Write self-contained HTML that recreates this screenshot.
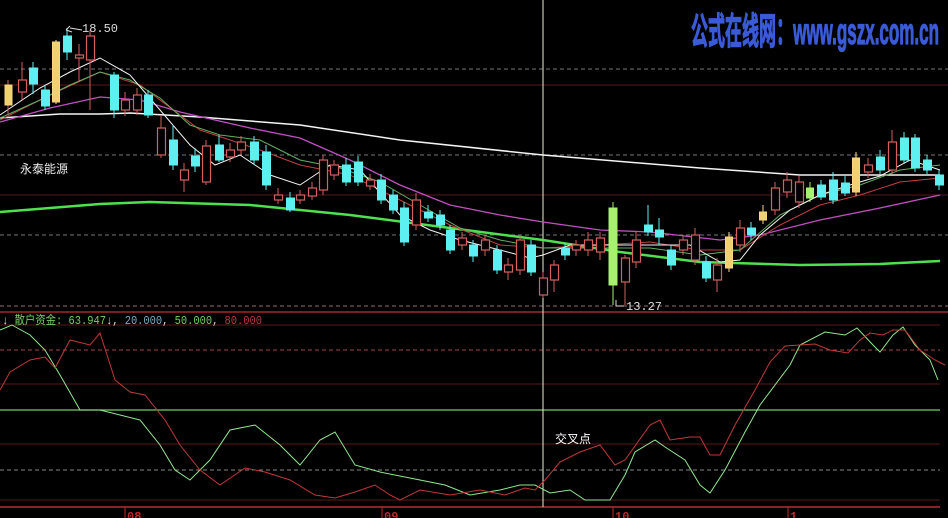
<!DOCTYPE html>
<html><head><meta charset="utf-8"><style>
html,body{margin:0;padding:0;background:#000;width:948px;height:518px;overflow:hidden}
svg{display:block}
.t{font-family:"Liberation Sans","Noto Sans CJK SC",sans-serif}
.m{font-family:"Liberation Mono","Noto Sans CJK SC",monospace}
.r{fill:#000;stroke:#d46060;stroke-width:1.2}
.c{fill:#5ef0f0;stroke:#5ef0f0}
.y{fill:#f0d070;stroke:#f8d880}
.g{fill:#a8f070;stroke:#a8f070}
.w{stroke-width:1}
</style></head><body>
<svg width="948" height="518" viewBox="0 0 948 518" xmlns="http://www.w3.org/2000/svg">
<rect width="948" height="518" fill="#000"/>
<g stroke="#777" stroke-dasharray="4,3" stroke-width="1">
<line x1="0" y1="69" x2="948" y2="69"/><line x1="0" y1="155" x2="948" y2="155"/><line x1="0" y1="235" x2="948" y2="235"/><line x1="0" y1="306" x2="948" y2="306"/>
</g>
<g stroke="#5a1818" stroke-width="1">
<line x1="0" y1="85" x2="948" y2="85"/><line x1="0" y1="195" x2="948" y2="195"/>
</g>
<line x1="0" y1="312" x2="948" y2="312" stroke="#a02828" stroke-width="1.5"/>
<g stroke="#5a1818" stroke-width="1">
<line x1="0" y1="325" x2="940" y2="325"/><line x1="0" y1="384" x2="940" y2="384"/><line x1="0" y1="444" x2="940" y2="444"/><line x1="0" y1="500" x2="940" y2="500"/>
</g>
<line x1="0" y1="350" x2="940" y2="350" stroke="#a04848" stroke-dasharray="4,3"/>
<line x1="0" y1="470" x2="940" y2="470" stroke="#888" stroke-dasharray="4,3"/>
<line x1="0" y1="410" x2="940" y2="410" stroke="#70d060" stroke-width="1.2"/>
<line x1="0" y1="507" x2="940" y2="507" stroke="#b03030" stroke-width="1.5"/>
<line x1="543" y1="0" x2="543" y2="507" stroke="#f0f0d0" stroke-width="1"/>
<polyline fill="none" stroke="#f4f4f4" stroke-width="1.5" points="0,118 60,114 100,114 130,113 200,117 300,125 400,140 543,155 700,168 800,175 940,175"/>
<polyline fill="none" stroke="#4ee04e" stroke-width="2.5" points="0,212 50,208 100,204 150,202 250,205 350,215 450,228 543,240 620,252 700,262 800,265 880,264 940,261"/>
<polyline fill="none" stroke="#c050c0" stroke-width="1.3" points="0,122 50,108 100,97 140,100 180,112 250,128 300,138 350,160 400,185 450,205 500,215 543,222 600,230 650,232 720,240 760,235 820,220 880,208 940,195"/>
<polyline fill="none" stroke="#c04040" stroke-width="1" points="0,120 50,95 100,72 140,85 200,130 260,150 300,165 350,175 400,200 450,225 500,245 543,248 600,245 650,242 700,250 740,250 780,225 820,205 860,195 900,182 940,178"/>
<polyline fill="none" stroke="#60b060" stroke-width="1" points="0,118 40,100 70,85 100,72 130,80 160,98 190,125 220,135 260,140 300,160 340,168 380,182 420,205 460,228 500,240 543,248 600,248 650,248 700,255 740,250 780,215 820,195 860,185 900,170 940,165"/>
<polyline fill="none" stroke="#f4f4f4" stroke-width="1" points="0,115 40,88 70,72 100,58 130,75 160,110 190,145 215,165 240,155 270,175 300,185 330,165 360,170 400,215 430,230 460,240 500,250 530,258 543,255 570,245 600,245 650,245 690,245 720,262 740,260 760,235 790,210 820,195 850,185 880,176 910,160 940,170"/>
<g class="w">
<g stroke="#d46060"><line x1="8" y1="80" x2="8" y2="115"/><line x1="22" y1="62" x2="22" y2="100"/><line x1="79" y1="44" x2="79" y2="82"/><line x1="90" y1="30" x2="90" y2="110"/><line x1="125" y1="92" x2="125" y2="116"/><line x1="137" y1="88" x2="137" y2="115"/><line x1="161" y1="115" x2="161" y2="158"/><line x1="184" y1="163" x2="184" y2="192"/><line x1="206" y1="140" x2="206" y2="185"/><line x1="230" y1="143" x2="230" y2="162"/><line x1="241" y1="136" x2="241" y2="155"/><line x1="278" y1="188" x2="278" y2="204"/><line x1="300" y1="190" x2="300" y2="204"/><line x1="312" y1="182" x2="312" y2="200"/><line x1="323" y1="155" x2="323" y2="195"/><line x1="334" y1="160" x2="334" y2="180"/><line x1="370" y1="174" x2="370" y2="190"/><line x1="416" y1="193" x2="416" y2="230"/><line x1="462" y1="232" x2="462" y2="250"/><line x1="485" y1="235" x2="485" y2="256"/><line x1="508" y1="258" x2="508" y2="280"/><line x1="520" y1="235" x2="520" y2="275"/><line x1="543" y1="272" x2="543" y2="298"/><line x1="554" y1="260" x2="554" y2="292"/><line x1="576" y1="240" x2="576" y2="256"/><line x1="588" y1="232" x2="588" y2="256"/><line x1="600" y1="232" x2="600" y2="260"/><line x1="625" y1="255" x2="625" y2="305"/><line x1="636" y1="232" x2="636" y2="268"/><line x1="683" y1="235" x2="683" y2="255"/><line x1="695" y1="228" x2="695" y2="265"/><line x1="717" y1="258" x2="717" y2="292"/><line x1="740" y1="220" x2="740" y2="252"/><line x1="775" y1="182" x2="775" y2="215"/><line x1="787" y1="172" x2="787" y2="198"/><line x1="799" y1="176" x2="799" y2="208"/><line x1="868" y1="158" x2="868" y2="178"/><line x1="892" y1="130" x2="892" y2="174"/></g>
<g stroke="#5ef0f0"><line x1="33" y1="62" x2="33" y2="94"/><line x1="45" y1="85" x2="45" y2="110"/><line x1="67" y1="28" x2="67" y2="60"/><line x1="114" y1="72" x2="114" y2="118"/><line x1="148" y1="90" x2="148" y2="118"/><line x1="173" y1="125" x2="173" y2="170"/><line x1="195" y1="148" x2="195" y2="172"/><line x1="219" y1="135" x2="219" y2="162"/><line x1="254" y1="136" x2="254" y2="165"/><line x1="266" y1="145" x2="266" y2="190"/><line x1="290" y1="192" x2="290" y2="212"/><line x1="346" y1="158" x2="346" y2="186"/><line x1="358" y1="156" x2="358" y2="186"/><line x1="381" y1="174" x2="381" y2="204"/><line x1="393" y1="190" x2="393" y2="214"/><line x1="404" y1="202" x2="404" y2="246"/><line x1="428" y1="205" x2="428" y2="222"/><line x1="440" y1="210" x2="440" y2="230"/><line x1="450" y1="225" x2="450" y2="254"/><line x1="473" y1="240" x2="473" y2="262"/><line x1="497" y1="245" x2="497" y2="274"/><line x1="531" y1="240" x2="531" y2="276"/><line x1="565" y1="243" x2="565" y2="260"/><line x1="648" y1="205" x2="648" y2="236"/><line x1="659" y1="218" x2="659" y2="245"/><line x1="671" y1="245" x2="671" y2="270"/><line x1="706" y1="256" x2="706" y2="282"/><line x1="751" y1="222" x2="751" y2="240"/><line x1="821" y1="180" x2="821" y2="200"/><line x1="833" y1="172" x2="833" y2="204"/><line x1="845" y1="176" x2="845" y2="196"/><line x1="880" y1="150" x2="880" y2="174"/><line x1="904" y1="132" x2="904" y2="164"/><line x1="915" y1="134" x2="915" y2="172"/><line x1="927" y1="155" x2="927" y2="174"/><line x1="939" y1="170" x2="939" y2="190"/></g>
<g stroke="#f8d880"><line x1="56" y1="40" x2="56" y2="104"/><line x1="729" y1="232" x2="729" y2="272"/><line x1="763" y1="205" x2="763" y2="224"/><line x1="856" y1="152" x2="856" y2="196"/></g>
<line x1="613" y1="202" x2="613" y2="305" stroke="#a8f070"/><line x1="810" y1="182" x2="810" y2="202" stroke="#a8f070"/>
</g>
<g>
<rect class="y" x="5" y="85" width="7" height="20"/>
<rect class="r" x="18.5" y="80" width="8" height="12"/>
<rect class="c" x="29.5" y="68" width="8" height="16"/>
<rect class="c" x="41.5" y="90" width="8" height="16"/>
<rect class="y" x="52.5" y="42" width="7" height="60"/>
<rect class="c" x="63.5" y="36" width="8" height="16"/>
<rect class="r" x="75.5" y="55" width="8" height="3"/>
<rect class="r" x="86.5" y="36" width="8" height="24"/>
<rect class="c" x="110.5" y="75" width="8" height="35"/>
<rect class="r" x="121.5" y="100" width="8" height="10"/>
<rect class="r" x="133.5" y="95" width="8" height="15"/>
<rect class="c" x="144.5" y="95" width="8" height="20"/>
<rect class="r" x="157.5" y="128" width="8" height="27"/>
<rect class="c" x="169.5" y="140" width="8" height="25"/>
<rect class="r" x="180.5" y="170" width="8" height="10"/>
<rect class="c" x="191.5" y="156" width="8" height="10"/>
<rect class="r" x="202.5" y="146" width="8" height="36"/>
<rect class="c" x="215.5" y="145" width="8" height="15"/>
<rect class="r" x="226.5" y="150" width="8" height="7"/>
<rect class="r" x="237.5" y="142" width="8" height="8"/>
<rect class="c" x="250.5" y="142" width="8" height="18"/>
<rect class="c" x="262.5" y="152" width="8" height="33"/>
<rect class="r" x="274.5" y="195" width="8" height="5"/>
<rect class="c" x="286.5" y="198" width="8" height="12"/>
<rect class="r" x="296.5" y="195" width="8" height="5"/>
<rect class="r" x="308.5" y="188" width="8" height="8"/>
<rect class="r" x="319.5" y="160" width="8" height="30"/>
<rect class="r" x="330.5" y="165" width="8" height="10"/>
<rect class="c" x="342.5" y="165" width="8" height="17"/>
<rect class="c" x="354.5" y="162" width="8" height="20"/>
<rect class="r" x="366.5" y="180" width="8" height="6"/>
<rect class="c" x="377.5" y="180" width="8" height="20"/>
<rect class="c" x="389.5" y="195" width="8" height="15"/>
<rect class="c" x="400.5" y="208" width="8" height="34"/>
<rect class="r" x="412.5" y="200" width="8" height="25"/>
<rect class="c" x="424.5" y="212" width="8" height="6"/>
<rect class="c" x="436.5" y="215" width="8" height="10"/>
<rect class="c" x="446.5" y="230" width="8" height="20"/>
<rect class="r" x="458.5" y="238" width="8" height="7"/>
<rect class="c" x="469.5" y="245" width="8" height="11"/>
<rect class="r" x="481.5" y="240" width="8" height="10"/>
<rect class="c" x="493.5" y="250" width="8" height="20"/>
<rect class="r" x="504.5" y="265" width="8" height="7"/>
<rect class="r" x="516.5" y="240" width="8" height="30"/>
<rect class="c" x="527.5" y="245" width="8" height="27"/>
<rect class="r" x="539.5" y="278" width="8" height="17"/>
<rect class="r" x="550.5" y="265" width="8" height="15"/>
<rect class="c" x="561.5" y="248" width="8" height="7"/>
<rect class="r" x="572.5" y="245" width="8" height="5"/>
<rect class="r" x="584.5" y="240" width="8" height="10"/>
<rect class="r" x="596.5" y="238" width="8" height="14"/>
<rect class="g" x="609" y="208" width="8" height="77"/>
<rect class="r" x="621.5" y="258" width="8" height="24"/>
<rect class="r" x="632.5" y="240" width="8" height="22"/>
<rect class="c" x="644.5" y="225" width="8" height="7"/>
<rect class="c" x="655.5" y="230" width="8" height="7"/>
<rect class="c" x="667.5" y="250" width="8" height="15"/>
<rect class="r" x="679.5" y="240" width="8" height="10"/>
<rect class="r" x="691.5" y="235" width="8" height="25"/>
<rect class="c" x="702.5" y="262" width="8" height="16"/>
<rect class="r" x="713.5" y="265" width="8" height="15"/>
<rect class="y" x="725.5" y="237" width="7" height="31"/>
<rect class="r" x="736.5" y="228" width="8" height="17"/>
<rect class="c" x="747.5" y="228" width="8" height="7"/>
<rect class="y" x="759.5" y="212" width="7" height="8"/>
<rect class="r" x="771.5" y="188" width="8" height="22"/>
<rect class="r" x="783.5" y="180" width="8" height="12"/>
<rect class="r" x="795.5" y="182" width="8" height="20"/>
<rect class="g" x="806.5" y="188" width="7" height="10"/>
<rect class="c" x="817.5" y="185" width="8" height="12"/>
<rect class="c" x="829.5" y="180" width="8" height="20"/>
<rect class="c" x="841.5" y="183" width="8" height="10"/>
<rect class="y" x="852.5" y="158" width="7" height="34"/>
<rect class="r" x="864.5" y="165" width="8" height="7"/>
<rect class="c" x="876.5" y="157" width="8" height="13"/>
<rect class="r" x="888.5" y="142" width="8" height="28"/>
<rect class="c" x="900.5" y="138" width="8" height="22"/>
<rect class="c" x="911.5" y="138" width="8" height="30"/>
<rect class="c" x="923.5" y="160" width="8" height="10"/>
<rect class="c" x="935.5" y="175" width="8" height="10"/>
</g>
<polyline fill="none" stroke="#90e890" stroke-width="1" points="0,330 12,325 30,335 45,350 60,375 80,410 100,410 120,415 140,420 160,445 175,470 190,480 210,460 230,430 255,425 280,445 300,465 320,440 335,432 355,465 380,472 420,480 445,485 470,495 500,490 520,485 535,485 550,493 570,490 585,500 610,500 625,475 635,452 655,440 665,447 685,460 700,485 710,493 725,470 745,432 760,405 790,365 800,345 825,332 845,335 857,328 873,345 880,352 893,335 903,327 915,345 930,360 938,380"/>
<polyline fill="none" stroke="#c03838" stroke-width="1" points="0,390 10,372 30,360 45,357 55,368 70,340 90,345 100,333 115,380 130,392 145,395 165,420 180,445 200,470 220,485 245,468 265,472 290,480 315,495 335,498 355,492 375,485 390,495 400,500 420,490 450,495 480,490 505,495 525,488 535,490 545,480 560,462 580,452 600,445 615,465 625,460 650,425 660,420 670,440 690,437 700,437 710,455 720,455 735,425 755,390 770,362 785,346 800,345 815,344 830,350 848,353 860,340 870,333 883,335 893,330 905,330 920,350 935,360 945,365"/>
<path d="M70,26 L66,30 M66,30 L72,32 M70,28 L82,30" stroke="#ddd" fill="none"/>
<text x="82" y="32" class="m" font-size="12" fill="#ddd">18.50</text>
<path d="M616,300 L616,306 L624,306" stroke="#ddd" fill="none"/>
<text x="626" y="310" class="m" font-size="12" fill="#ddd">13.27</text>
<text x="20" y="173" class="t" font-size="12" fill="#eee">永泰能源</text>
<text x="555" y="443" class="t" font-size="12" fill="#fff">交叉点</text>
<text x="2" y="324" class="m" font-size="12" textLength="260" lengthAdjust="spacingAndGlyphs"><tspan fill="#e0e0e0">↓</tspan><tspan fill="#70d060"> 散户资金: 63.947</tspan><tspan fill="#e0e0e0">↓</tspan><tspan fill="#d0d0d0">, </tspan><tspan fill="#7aaac8">20.000</tspan><tspan fill="#d0d0d0">, </tspan><tspan fill="#70d060">50.000</tspan><tspan fill="#d0d0d0">, </tspan><tspan fill="#c03838">80.000</tspan></text>
<g class="m" font-size="12" fill="#c02828" font-weight="bold">
<text x="127" y="520">08</text><text x="384" y="520">09</text><text x="615" y="520">10</text><text x="790" y="520">1</text>
</g>
<g stroke="#c02828"><line x1="125" y1="507" x2="125" y2="518"/><line x1="382" y1="507" x2="382" y2="518"/><line x1="613" y1="507" x2="613" y2="518"/><line x1="788" y1="507" x2="788" y2="518"/></g>
<text x="691" y="44" class="t" font-size="37" font-weight="bold" fill="#3a5ad8" stroke="#3a5ad8" stroke-width="1.2" textLength="248" lengthAdjust="spacingAndGlyphs">公式在线网：www.gszx.com.cn</text>
</svg>
</body></html>
